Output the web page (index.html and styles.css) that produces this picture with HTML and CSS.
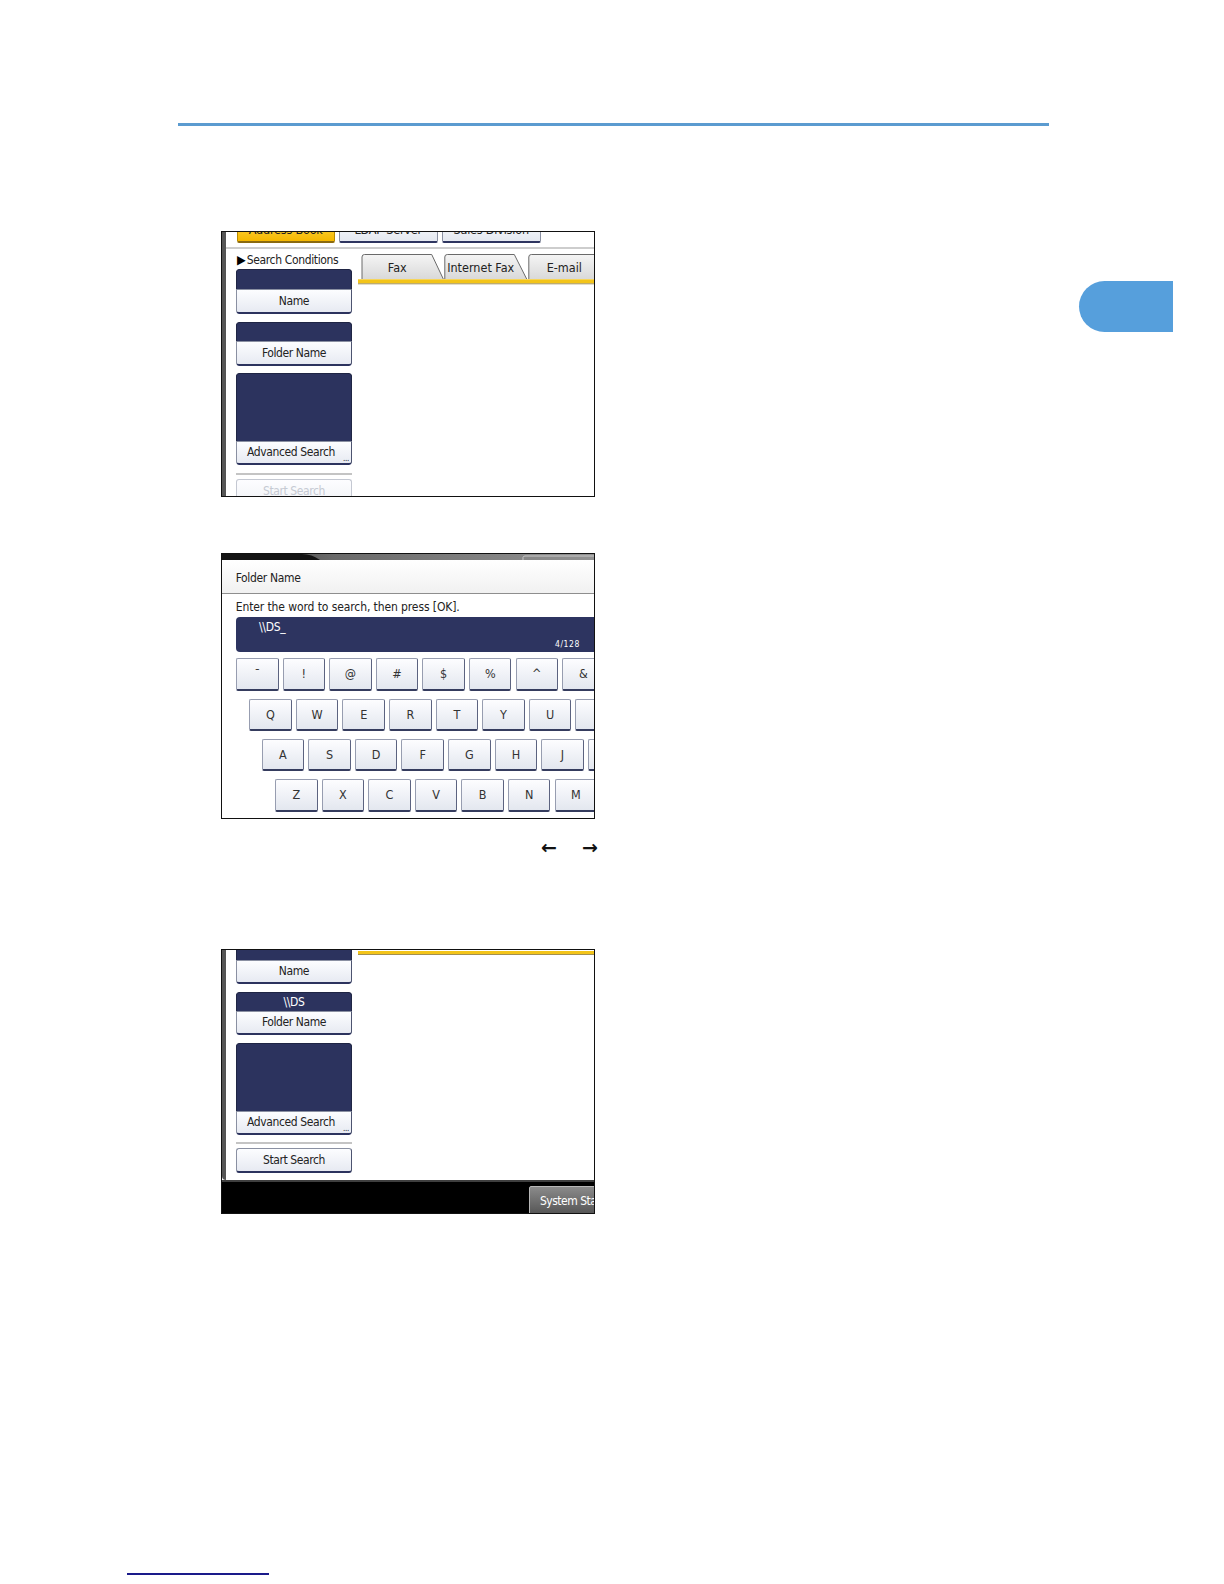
FILE: index.html
```html
<!DOCTYPE html>
<html>
<head>
<meta charset="utf-8">
<title>Folder Name search</title>
<link rel="stylesheet" href="styles.css">
</head>
<body>
<div class="page">
  <div class="rule"></div>
  <div class="thumb"></div>

  <!-- Screenshot 1 -->
  <div class="shot shot1">
    <div class="strip"></div>
    <div class="content">
      <div class="topbar">
        <div class="tbtn yellow w98">Address Book</div>
        <div class="tbtn w99">LDAP Server</div>
        <div class="tbtn w99">Sales Division</div>
      </div>
      <div class="hline"></div>
      <div class="main">
        <div class="left">
          <div class="cond-title"><span class="tri">&#9654;</span>Search Conditions</div>
          <div class="grp"><div class="dark h20"></div><div class="light">Name</div></div>
          <div class="grp mt8"><div class="dark h19"></div><div class="light">Folder Name</div></div>
          <div class="grp mt7"><div class="dark h68"></div><div class="light adv">Advanced Search<span class="dots">...</span></div></div>
          <div class="sep"></div>
          <div class="btn-start disabled">Start Search</div>
        </div>
        <div class="right">
          <svg class="tabs" width="240" height="32" viewBox="0 0 240 32">
            <defs>
              <linearGradient id="tg" x1="0" y1="0" x2="0" y2="1">
                <stop offset="0" stop-color="#f5f5f5"/>
                <stop offset="1" stop-color="#d9d9d9"/>
              </linearGradient>
            </defs>
            <path d="M4,26 V4 Q4,1.5 6.5,1.5 H73.7 L85.3,26" fill="url(#tg)" stroke="#6a6a6a" stroke-width="1"/>
            <path d="M86.8,26 V4 Q86.8,1.5 89.3,1.5 H156.3 L168.7,26" fill="url(#tg)" stroke="#6a6a6a" stroke-width="1"/>
            <path d="M170.8,26 V4 Q170.8,1.5 173.3,1.5 H241 V26" fill="url(#tg)" stroke="#6a6a6a" stroke-width="1"/>
            <text class="tabtxt" x="39.3" y="18.5" text-anchor="middle">Fax</text>
            <text class="tabtxt" x="122.7" y="18.5" text-anchor="middle">Internet Fax</text>
            <text class="tabtxt" x="206.3" y="18.5" text-anchor="middle">E-mail</text>
            <rect x="0" y="26.3" width="240" height="4" fill="#f3c419"/>
            <rect x="0" y="30.3" width="240" height="1" fill="#a39050"/>
          </svg>
        </div>
      </div>
    </div>
  </div>

  <!-- Screenshot 2 -->
  <div class="shot shot2">
    <svg class="hdr" width="372" height="6" viewBox="0 0 372 6">
      <defs>
        <linearGradient id="hg" x1="0" y1="0" x2="1" y2="0">
          <stop offset="0" stop-color="#3a3a3a"/>
          <stop offset="0.3" stop-color="#6a6a6a"/>
          <stop offset="1" stop-color="#929292"/>
        </linearGradient>
      </defs>
      <rect x="0" y="0" width="372" height="6" fill="url(#hg)"/>
      <path d="M0,0 H80 Q90,0 98,6 H0 Z" fill="#141414"/>
      <path d="M301,6 V3.5 Q301,2 303,2 H372" fill="none" stroke="#c8c8c8" stroke-width="1"/>
    </svg>
    <div class="dlg-title">Folder Name</div>
    <div class="prompt">Enter the word to search, then press [OK].</div>
    <div class="field">
      <span class="ftext">\\DS_</span>
      <span class="fcount">4/128</span>
    </div>
    <div class="krow r1">
      <div class="key">&#175;</div><div class="key">!</div><div class="key">@</div><div class="key">#</div><div class="key">$</div><div class="key">%</div><div class="key">^</div><div class="key">&amp;</div>
    </div>
    <div class="krow r2">
      <div class="key">Q</div><div class="key">W</div><div class="key">E</div><div class="key">R</div><div class="key">T</div><div class="key">Y</div><div class="key">U</div><div class="key">I</div>
    </div>
    <div class="krow r3">
      <div class="key">A</div><div class="key">S</div><div class="key">D</div><div class="key">F</div><div class="key">G</div><div class="key">H</div><div class="key">J</div><div class="key">K</div>
    </div>
    <div class="krow r4">
      <div class="key">Z</div><div class="key">X</div><div class="key">C</div><div class="key">V</div><div class="key">B</div><div class="key">N</div><div class="key">M</div>
    </div>
  </div>

  <div class="arrows"><span>&#8592;</span><span>&#8594;</span></div>

  <!-- Screenshot 3 -->
  <div class="shot shot3">
    <div class="s3-body">
      <div class="strip"></div>
      <div class="content">
        <div class="main">
          <div class="left">
            <div class="grp cut"><div class="dark h20"></div><div class="light h24">Name</div></div>
            <div class="grp mt8"><div class="dark h19 val">\\DS</div><div class="light h24">Folder Name</div></div>
            <div class="grp mt8"><div class="dark h68"></div><div class="light adv">Advanced Search<span class="dots">...</span></div></div>
            <div class="sep s3"></div>
            <div class="btn-start">Start Search</div>
          </div>
          <div class="right">
            <div class="yline"></div>
          </div>
        </div>
      </div>
    </div>
    <div class="s3-foot">
      <div class="sysbtn">System Status</div>
    </div>
  </div>

  <div class="link"></div>
</div>
</body>
</html>
```

FILE: styles.css
```css
* { box-sizing: border-box; margin: 0; padding: 0; }

body {
  margin: 0;
  background: #fff;
  font-family: "DejaVu Sans Condensed", "Liberation Sans Narrow", "Liberation Sans", sans-serif;
  color: #1a1a1a;
}

.page {
  position: relative;
  width: 1224px;
  height: 1584px;
  overflow: hidden;
  padding-top: 123px;
}

.rule {
  margin-left: 178px;
  width: 871px;
  height: 3px;
  background: #5b9bd0;
}

.thumb {
  position: absolute;
  left: 1079px;
  top: 281px;
  width: 94px;
  height: 51px;
  border-radius: 25.5px 0 0 25.5px;
  background: #569fdc;
}

/* ---------- screenshot frames ---------- */
.shot {
  margin-left: 221px;
  width: 374px;
  height: 266px;
  border: 1px solid #111;
  overflow: hidden;
  background: #fff;
}

.shot1 { margin-top: 105px; display: flex; }
.shot2 { margin-top: 56px; }
.shot3 { margin-top: 94px; height: 265px; display: flex; flex-direction: column; }

.strip {
  flex: none;
  width: 4px;
  background: #555;
}

.content {
  flex: 1;
  display: flex;
  flex-direction: column;
  min-width: 0;
  min-height: 0;
}

/* top cut-off buttons */
.topbar {
  flex: none;
  display: flex;
  gap: 4px;
  height: 11px;
  align-items: flex-end;
  overflow: hidden;
  padding-left: 10.7px;
}

.tbtn {
  flex: none;
  height: 24px;
  font-size: 12.5px;
  line-height: 19px;
  letter-spacing: -0.2px;
  text-align: center;
  color: #222;
  background: linear-gradient(#fbfcfe, #e4e8f0);
  border: 1px solid #8a90a2;
  border-bottom: 2px solid #2e3560;
  border-radius: 0 0 2px 2px;
  white-space: nowrap;
}
.tbtn.yellow {
  background: linear-gradient(#ffd84a, #f5b800);
  border-color: #b88a00;
  border-bottom-color: #8a6a10;
}
.w98 { width: 98px; }
.w99 { width: 99px; }

.hline {
  flex: none;
  margin-top: 4px;
  height: 2px;
  background: #cdcdcd;
}

.main {
  display: flex;
  padding-left: 10px;
  flex: 1;
  min-height: 0;
  overflow: hidden;
}

.left {
  flex: none;
  width: 116px;
  display: flex;
  flex-direction: column;
}
.left > * { flex-shrink: 0; }

.cond-title {
  margin-top: 2px;
  height: 18px;
  font-size: 12px;
  line-height: 18px;
  letter-spacing: -0.35px;
  color: #222;
  white-space: nowrap;
}
.tri {
  font-size: 12.5px;
  color: #000;
  letter-spacing: 0;
  margin-left: 1px;
  margin-right: 1px;
}

.grp {
  display: flex;
  flex-direction: column;
  border-radius: 3px;
  overflow: hidden;
}
.mt7 { margin-top: 7px; }
.mt8 { margin-top: 8px; }

.dark {
  background: #2c335e;
  border: 1px solid #1f2544;
  border-bottom: none;
  border-radius: 3px 3px 0 0;
  color: #fff;
  font-size: 12px;
  text-align: center;
  line-height: 18px;
}
.h20 { height: 20px; }
.h19 { height: 19px; }
.h68 { height: 68px; }

.light {
  position: relative;
  height: 25px;
  background: linear-gradient(#fcfdff, #e7eaf2);
  border: 1px solid #8a90a2;
  border-right-color: #4d5470;
  border-bottom: 2px solid #2c335e;
  border-radius: 0 0 3px 3px;
  font-size: 12px;
  letter-spacing: -0.4px;
  line-height: 22px;
  text-align: center;
  color: #222;
  white-space: nowrap;
}
.light.h24 { height: 24px; line-height: 21px; }
.light.adv { height: 24px; line-height: 21px; padding-right: 6px; }

.dots {
  position: absolute;
  right: 2px;
  bottom: 0;
  font-size: 8px;
  line-height: 8px;
  letter-spacing: -0.3px;
}

.sep {
  margin-top: 8px;
  height: 2px;
  background: #c4c4c4;
}
.sep.s3 { margin-top: 7px; }

.btn-start {
  margin-top: 4px;
  height: 25px;
  background: linear-gradient(#fcfdff, #e7eaf2);
  border: 1px solid #8a90a2;
  border-right-color: #4d5470;
  border-bottom: 2px solid #2c335e;
  border-radius: 3px;
  font-size: 12px;
  letter-spacing: -0.4px;
  line-height: 22px;
  text-align: center;
  color: #222;
}
.btn-start.disabled {
  color: #c6cad3;
  border-color: #c4c8d2;
  border-bottom-color: #b8bdcb;
  background: linear-gradient(#fdfdff, #f1f3f7);
}

.right {
  flex: 1;
  margin-left: 6px;
  min-width: 0;
  overflow: hidden;
}

.tabs { display: block; margin-top: 4px; }
.tabtxt {
  font-family: "DejaVu Sans Condensed", "Liberation Sans Narrow", "Liberation Sans", sans-serif;
  font-size: 12.5px;
  fill: #222;
}

/* ---------- screenshot 2 ---------- */
.hdr { display: block; }

.dlg-title {
  height: 34px;
  padding-left: 13.7px;
  padding-top: 3px;
  font-size: 12px;
  letter-spacing: -0.35px;
  line-height: 30px;
  color: #222;
  background: linear-gradient(#ffffff, #f1f1f1);
  border-bottom: 1px solid #8e8e8e;
}

.prompt {
  height: 22.7px;
  padding-left: 13.7px;
  padding-top: 5.3px;
  font-size: 12px;
  letter-spacing: -0.1px;
  line-height: 16px;
  color: #222;
  white-space: nowrap;
}

.field {
  margin-left: 14px;
  width: 400px;
  height: 35px;
  background: #2d3460;
  border-radius: 4px;
  color: #fff;
  display: flex;
  padding: 3px 0 0 23px;
}
.ftext { font-size: 12px; line-height: 15px; letter-spacing: -0.3px; }
.fcount {
  margin-left: auto;
  margin-right: 56px;
  align-self: flex-end;
  margin-bottom: 3px;
  font-size: 8.5px;
  line-height: 10px;
  letter-spacing: 0.6px;
}

.krow {
  display: flex;
  gap: 4.1px;
  margin-top: 7.8px;
}
.krow.r1 { margin-left: 14px; margin-top: 6.7px; }
.krow.r2 { margin-left: 27.3px; }
.krow.r3 { margin-left: 39.7px; }
.krow.r4 { margin-left: 53px; }

.key {
  flex: none;
  width: 42.5px;
  height: 32.5px;
  background: linear-gradient(#fdfdff, #e3e7ef);
  border: 1px solid #979db0;
  border-right-color: #5c6380;
  border-bottom: 2px solid #353c5e;
  border-radius: 2px;
  font-size: 12.5px;
  line-height: 29px;
  text-align: center;
  color: #333;
}

/* ---------- arrows ---------- */
.arrows {
  margin-top: 20px;
  margin-left: 541px;
  height: 16px;
  display: flex;
  gap: 25px;
  font-family: "DejaVu Sans", sans-serif;
  font-size: 19px;
  line-height: 16px;
  font-weight: bold;
  color: #111;
}

/* ---------- screenshot 3 ---------- */
.s3-body {
  flex: none;
  display: flex;
  height: 230px;
  border-bottom-left-radius: 4px;
  overflow: hidden;
  background: #fff;
}
.grp.cut { margin-top: -10px; }
.dark.val { line-height: 18px; font-size: 12px; letter-spacing: -0.3px; }

.yline {
  margin-top: 1px;
  height: 4px;
  background: #f3c419;
  border-bottom: 1px solid #a39050;
}

.s3-foot {
  flex: 1;
  background: #000;
  border-top: 2px solid #3f3f3f;
  display: flex;
  padding-top: 3.7px;
}

.sysbtn {
  margin-left: 307px;
  flex: none;
  width: 100px;
  height: 34px;
  background: linear-gradient(#8a8a8a, #4c4c4c);
  border: 1px solid #b8b8b8;
  border-radius: 2px 0 0 0;
  color: #fff;
  font-size: 12px;
  letter-spacing: -0.5px;
  line-height: 28px;
  padding-left: 10px;
  white-space: nowrap;
}

.link {
  margin-top: 359px;
  margin-left: 127px;
  width: 142px;
  height: 2px;
  background: #1a1a8a;
}
```
